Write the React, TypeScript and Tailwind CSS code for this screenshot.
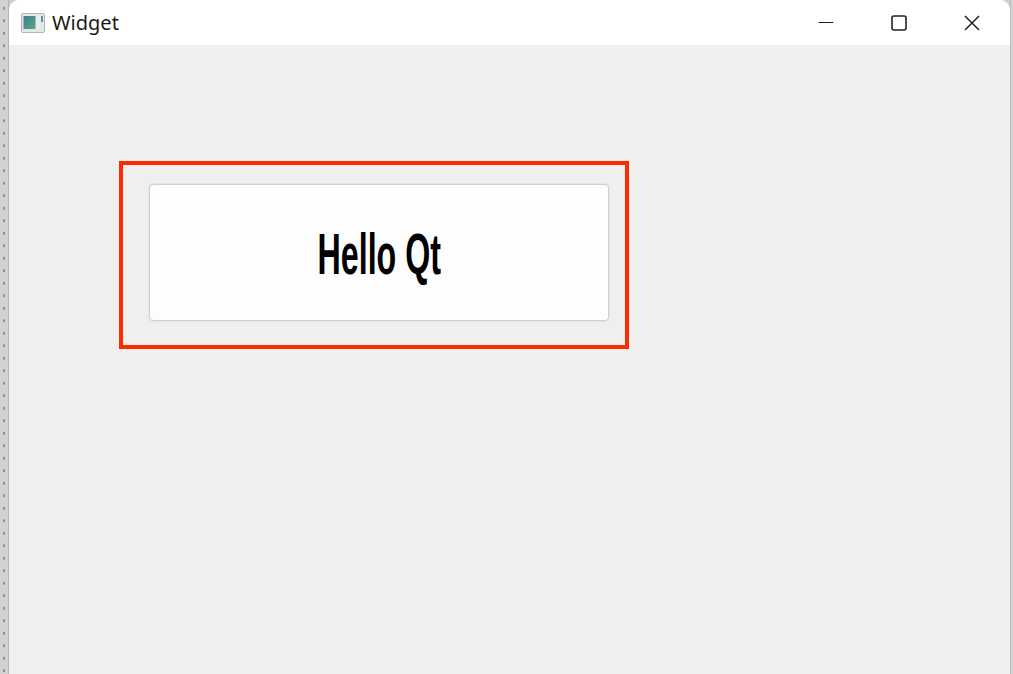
import React from 'react';

const WidgetIcon = () => (
	<svg width="24" height="20" viewBox="0 0 24 20" className="shrink-0">
		<defs>
			<linearGradient id="pane" x1="0" y1="0" x2="1" y2="1">
				<stop offset="0" stopColor="#3f7f9a" />
				<stop offset="1" stopColor="#5aa878" />
			</linearGradient>
		</defs>
		<rect x="0.5" y="0.5" width="23" height="19" rx="1.5" fill="#e3e6ea" stroke="#b0b4b9" />
		<rect x="2.5" y="3" width="12" height="13" fill="url(#pane)" />
		<rect x="15" y="3" width="4" height="13" fill="#e9edf0" />
		<rect x="20" y="3" width="2" height="6" fill="#5a9aa0" />
	</svg>
);

const App: React.FC = () => {
	return (
		<div className="flex h-[674px] w-[1013px] overflow-hidden bg-[#cfcfcf] font-['Noto_Sans','Liberation_Sans',sans-serif]">
			<div className="h-full w-[9px] shrink-0 border-r border-[#b4b4b4] bg-[#d2d2d2] bg-[radial-gradient(circle,#8a8a8a_1px,transparent_1.5px)] bg-size-[8px_12.5px] bg-position-[0px_2px] bg-repeat-y"></div>
			<div className="flex h-full w-[1001px] shrink-0 flex-col overflow-hidden rounded-t-[10px] bg-[#efefef]">
				<div className="flex h-[45px] shrink-0 items-center bg-white">
					<div className="ml-3 flex items-center gap-[7px]">
						<WidgetIcon />
						<span className="text-[20px] leading-none text-[#1a1a1a]">Widget</span>
					</div>
					<div className="ml-auto flex items-center">
						<button className="flex h-[45px] w-[73px] items-center justify-center">
							<svg width="16" height="16" viewBox="0 0 16 16"><path d="M0.5 7.5H15.5" stroke="#222" strokeWidth="1.2" /></svg>
						</button>
						<button className="flex h-[45px] w-[73px] items-center justify-center">
							<svg width="16" height="16" viewBox="0 0 16 16"><rect x="1" y="1" width="14" height="14" rx="2" fill="none" stroke="#222" strokeWidth="1.6" /></svg>
						</button>
						<button className="mr-[2px] flex h-[45px] w-[73px] items-center justify-center">
							<svg width="16" height="16" viewBox="0 0 16 16"><path d="M1 1L15 15M15 1L1 15" stroke="#222" strokeWidth="1.5" /></svg>
						</button>
					</div>
				</div>
				<div className="flex-1 pl-[110px] pt-[116px]">
					<div className="h-[188px] w-[510px] border-4 border-[#ff2a00] px-[26px] py-[19px]">
						<button className="flex h-[137px] w-[460px] items-center justify-center rounded-[4px] border border-[#cfcfcf] bg-[#fdfdfd] shadow-[0_0_0_1px_#e6e6e6]">
							<span className="inline-block translate-y-[2px] scale-x-[0.565] font-['Liberation_Sans',sans-serif] text-[57px] leading-none font-bold text-black">Hello Qt</span>
						</button>
					</div>
				</div>
			</div>
			<div className="h-full flex-1 border-l border-[#bdbdbd] bg-[#d4d4d4]"></div>
		</div>
	);
};

export default App;
